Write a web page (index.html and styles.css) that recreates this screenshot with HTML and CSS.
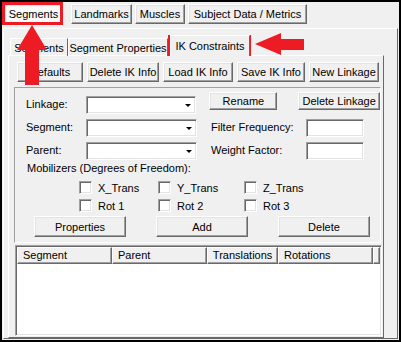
FILE: index.html
```html
<!DOCTYPE html>
<html lang="en">
<head>
    <meta charset="UTF-8">
    <title>IK Constraints</title>
    <link rel="stylesheet" href="styles.css">
</head>
<body>
    <div class="window">
        <div class="main-tabs">
            <div class="btn tab tab-segments">Segments</div>
            <div class="btn tab tab-landmarks">Landmarks</div>
            <div class="btn tab tab-muscles">Muscles</div>
            <div class="btn tab tab-subject">Subject Data / Metrics</div>
        </div>

        <div class="page">
            <div class="sub-tabs">
                <div class="subtab st-segments">Segments</div>
                <div class="subtab st-props">Segment Properties</div>
                <div class="subtab st-ik active">IK Constraints</div>
            </div>

            <div class="sub-panel">
                <div class="toolbar">
                    <div class="btn tb-defaults">Defaults</div>
                    <div class="btn tb-delete">Delete IK Info</div>
                    <div class="btn tb-load">Load IK Info</div>
                    <div class="btn tb-save">Save IK Info</div>
                    <div class="btn tb-new">New Linkage</div>
                </div>

                <div class="group">
                    <div class="row row-first">
                        <span class="label">Linkage:</span>
                        <div class="field combo"><span class="arrow"></span></div>
                        <div class="btn btn-rename">Rename</div>
                        <div class="btn btn-dellink">Delete Linkage</div>
                    </div>
                    <div class="row">
                        <span class="label">Segment:</span>
                        <div class="field combo"><span class="arrow"></span></div>
                        <span class="label label-right">Filter Frequency:</span>
                        <div class="field textbox"></div>
                    </div>
                    <div class="row">
                        <span class="label">Parent:</span>
                        <div class="field combo"><span class="arrow"></span></div>
                        <span class="label label-right">Weight Factor:</span>
                        <div class="field textbox"></div>
                    </div>

                    <div class="mob-label">Mobilizers (Degrees of Freedom):</div>

                    <div class="checks">
                        <label class="check c1"><span class="box"></span>X_Trans</label>
                        <label class="check c2"><span class="box"></span>Y_Trans</label>
                        <label class="check c3"><span class="box"></span>Z_Trans</label>
                        <label class="check c1"><span class="box"></span>Rot 1</label>
                        <label class="check c2"><span class="box"></span>Rot 2</label>
                        <label class="check c3"><span class="box"></span>Rot 3</label>
                    </div>

                    <div class="actions">
                        <div class="btn">Properties</div>
                        <div class="btn">Add</div>
                        <div class="btn">Delete</div>
                    </div>
                </div>

                <div class="list">
                    <div class="list-head">
                        <div class="col col-seg">Segment</div>
                        <div class="col col-par">Parent</div>
                        <div class="col col-tr">Translations</div>
                        <div class="col col-rot">Rotations</div>
                        <div class="col col-fill"></div>
                    </div>
                </div>
            </div>
        </div>
    </div>

    <!-- annotation marks drawn over the screenshot -->
    <svg class="marks" width="401" height="342" viewBox="0 0 401 342">
        <rect x="3.5" y="3.5" width="58" height="20" fill="none" stroke="#ed1c24" stroke-width="3"/>
        <rect x="169.5" y="36.5" width="80" height="18" fill="none" stroke="#ed1c24" stroke-width="3"/>
        <polygon points="32,25 47,50 39,50 39,85 25,85 25,50 17,50" fill="#ed1c24"/>
        <polygon points="255,44 281,33 281,39 304,39 304,50 281,50 281,55" fill="#ed1c24"/>
    </svg>
</body>
</html>
```

FILE: styles.css
```css
body {
    margin: 0;
    position: relative;
    background-color: #f0f0f0;
    font-family: "Liberation Sans", Arial, sans-serif;
    font-size: 11px;
    color: #000000;
}
.window {
    width: 401px;
    height: 342px;
    box-sizing: border-box;
    border: 2px solid #000000;
    background-color: #f0f0f0;
}
.btn {
    box-sizing: border-box;
    display: flex;
    align-items: center;
    justify-content: center;
    background-color: #f0f0f0;
    border: 1px solid;
    border-color: #ffffff #696969 #696969 #ffffff;
    box-shadow: inset -1px -1px #a0a0a0, inset 1px 1px #e3e3e3;
    white-space: nowrap;
}
.field {
    box-sizing: border-box;
    background-color: #ffffff;
    border: 1px solid;
    border-color: #a0a0a0 #ffffff #ffffff #a0a0a0;
    box-shadow: inset 1px 1px #696969, inset -1px -1px #e3e3e3;
}

/* top level tabs (button style) */
.main-tabs {
    display: flex;
    gap: 3px;
    padding: 2px 0 0 2px;
}
.tab {
    height: 20px;
}
.tab-segments {
    width: 59px;
    margin-right: 5px;
    background-color: #fafafa;
}
.tab-landmarks { width: 61px; }
.tab-muscles { width: 50px; }
.tab-subject { width: 119px; }

.page {
    box-sizing: border-box;
    height: 311px;
    margin: 4px 1px 0;
    border: 1px solid;
    border-color: #ffffff #696969 #696969 #ffffff;
}

/* second level tabs */
.sub-tabs {
    display: flex;
    align-items: flex-end;
    height: 26px;
    padding-left: 6px;
}
.subtab {
    box-sizing: border-box;
    height: 18px;
    display: flex;
    align-items: center;
    justify-content: center;
    border: 1px solid;
    border-bottom: none;
    border-color: #ffffff #696969 transparent #ffffff;
    margin-bottom: -1px;
}
.st-segments { width: 58px; }
.st-props { width: 100px; }
.st-ik {
    width: 80px;
    height: 21px;
    margin-left: 2px;
    position: relative;
    z-index: 1;
    background-color: #f0f0f0;
}

.sub-panel {
    box-sizing: border-box;
    width: 376px;
    height: 283px;
    margin-left: 4px;
    border: 1px solid;
    border-color: #ffffff #696969 #696969 #ffffff;
    padding: 6px 0 0 8px;
}

.toolbar {
    display: flex;
    gap: 4px;
}
.toolbar .btn { height: 20px; }
.tb-defaults { width: 66px; }
.tb-delete { width: 72px; }
.tb-load { width: 70px; }
.tb-save { width: 68px; }
.tb-new { width: 70px; }

/* group area */
.group {
    box-sizing: border-box;
    width: 367px;
    height: 156px;
    margin: 5px 0 0 -3px;
    border: 1px solid;
    border-color: #a0a0a0 #ffffff #ffffff #a0a0a0;
    padding: 4px 0 0 11px;
}
.row {
    display: flex;
    align-items: flex-start;
    height: 23px;
}
.row .label {
    width: 60px;
    margin-top: 6px;
}
.combo {
    position: relative;
    width: 111px;
    height: 18px;
    margin-top: 4px;
}
.arrow {
    position: absolute;
    right: 4px;
    top: 7px;
    border-left: 3px solid transparent;
    border-right: 3px solid transparent;
    border-top: 3px solid #000000;
}
.btn-rename {
    width: 68px;
    height: 18px;
    margin-left: 13px;
}
.btn-dellink {
    width: 82px;
    height: 18px;
    margin-left: 21px;
}
.row .label-right {
    width: 95px;
    margin-left: 14px;
}
.textbox {
    width: 58px;
    height: 18px;
    margin-top: 4px;
}

.mob-label {
    margin: 1px 0 0 1px;
    height: 13px;
    line-height: 13px;
}

.checks {
    display: grid;
    grid-template-columns: 79px 86px 80px;
    row-gap: 5px;
    margin: 6px 0 0 53px;
}
.check {
    display: flex;
    align-items: center;
    gap: 6px;
    height: 13px;
}
.box {
    box-sizing: border-box;
    width: 13px;
    height: 13px;
    background-color: #ffffff;
    border: 1px solid;
    border-color: #a0a0a0 #ffffff #ffffff #a0a0a0;
    box-shadow: inset 1px 1px #696969, inset -1px -1px #e3e3e3;
}

.actions {
    display: flex;
    gap: 30px;
    margin: 4px 0 0 8px;
}
.actions .btn {
    width: 92px;
    height: 21px;
}

/* list view */
.list {
    box-sizing: border-box;
    width: 367px;
    height: 91px;
    margin: 2px 0 0 -2px;
    background-color: #ffffff;
    border: 1px solid;
    border-color: #a0a0a0 #ffffff #ffffff #a0a0a0;
    box-shadow: inset 1px 1px #696969, inset -1px -1px #e3e3e3;
    padding: 1px;
}
.list-head {
    display: flex;
    height: 17px;
}
.col {
    box-sizing: border-box;
    height: 17px;
    line-height: 15px;
    padding-left: 5px;
    background-color: #f0f0f0;
    border: 1px solid;
    border-color: #ffffff #696969 #696969 #ffffff;
    box-shadow: inset -1px -1px #a0a0a0;
}
.col-seg { width: 96px; }
.col-par { width: 96px; }
.col-tr { width: 72px; }
.col-rot { width: 96px; }
.col-fill { flex: 1; }

.marks {
    position: absolute;
    top: 0;
    left: 0;
}
```
